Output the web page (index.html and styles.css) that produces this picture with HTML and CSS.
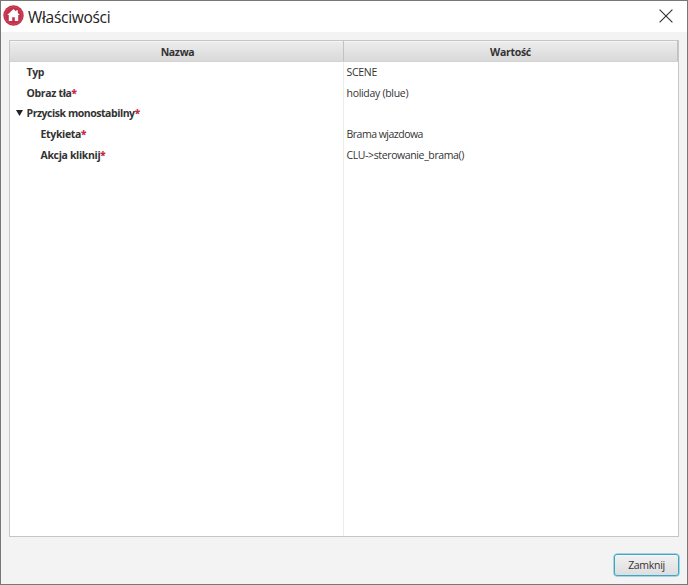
FILE: index.html
```html
<!DOCTYPE html>
<html lang="pl">
<head>
<meta charset="utf-8">
<title>Właściwości</title>
<link rel="stylesheet" href="styles.css">
</head>
<body>
<div class="window">
  <header class="titlebar">
    <svg class="logo" width="21" height="21" viewBox="0 0 21 21">
      <circle cx="10.5" cy="10.5" r="10.2" fill="#c4304a"/>
      <circle cx="10.5" cy="10.5" r="8.6" fill="none" stroke="#d4546a" stroke-width=".6"/>
      <path d="M10.5 4 4.2 10h1.6v6h3.4v-3.8h2.6V16h3.4v-6h1.6l-2-1.9V5.3h-1.6v1.3z" fill="#fff"/>
    </svg>
    <h1 class="title">Właściwości</h1>
    <svg class="close" width="14" height="14" viewBox="0 0 14 14"><path d="M.6.6l12.8 12.8M13.4.6.6 13.4" stroke="#333" stroke-width="1.15"/></svg>
  </header>
  <main class="table">
    <div class="row head"><div class="name">Nazwa</div><div class="value">Wartość</div></div>
    <div class="row"><div class="name">Typ</div><div class="value">SCENE</div></div>
    <div class="row"><div class="name">Obraz tła<b>*</b></div><div class="value">holiday (blue)</div></div>
    <div class="row"><div class="name parent"><svg class="arrow" width="7" height="6" viewBox="0 0 7 6"><path d="M0 0h7L3.5 6z" fill="#222"/></svg><span class="group">Przycisk monostabilny<b>*</b></span></div><div class="value"></div></div>
    <div class="row"><div class="name child">Etykieta<b>*</b></div><div class="value label">Brama wjazdowa</div></div>
    <div class="row"><div class="name child">Akcja kliknij<b>*</b></div><div class="value action">CLU-&gt;sterowanie_brama()</div></div>
    <div class="row filler"><div class="name"></div><div class="value"></div></div>
  </main>
  <footer class="footer"><button class="button">Zamknij</button></footer>
</div>
</body>
</html>
```
FILE: styles.css
```css
* { box-sizing: border-box; }
body { margin: 0; font-family: "Open Sans", "Noto Sans", sans-serif; color: #333; }
.window {
  width: 688px;
  height: 585px;
  display: flex;
  flex-direction: column;
  background: #f3f3f3;
  border: 1px solid #777;
}
.titlebar {
  height: 31px;
  flex: none;
  display: flex;
  align-items: center;
  padding: 0 14px 2px 2px;
  background: #fff;
}
.title {
  flex: 1;
  margin: 3px 0 0 4px;
  font-size: 15.5px;
  font-weight: 400;
  line-height: 20px;
  letter-spacing: -0.3px;
  color: #222;
}
.table {
  flex: none;
  width: 670px;
  height: 497px;
  margin: 8px 0 0 8px;
  display: flex;
  flex-direction: column;
  border: 1px solid #c6c6c6;
  background: #fff;
}
.row {
  display: flex;
  flex: none;
  height: 20.7px;
  font-size: 10.5px;
  line-height: 20.7px;
  white-space: pre;
}
.name {
  width: 334px;
  flex: none;
  padding-left: 16.5px;
  border-right: 1px solid #ececec;
  font-weight: 700;
  letter-spacing: -0.34px;
}
.value { flex: 1; padding-left: 2.5px; letter-spacing: -0.3px; }
.label { letter-spacing: -0.5px; }
.action { letter-spacing: -0.38px; }
.head {
  height: 21px;
  background: linear-gradient(#ededed, #d9d9d9);
  border-bottom: 1px solid #d2d2d2;
  box-shadow: inset 0 1px #f5f5f5;
}
.head .name, .head .value {
  padding: 1px 0 0 2px;
  text-align: center;
  font-weight: 700;
  line-height: 21px;
  border-right: 1px solid #c2c2c2;
}
.head .value { padding-left: 0; }
.parent { display: flex; align-items: center; padding-left: 6px; }
.group { letter-spacing: -0.46px; }
.arrow { margin: 0 3.5px 1px 0; }
.child { padding-left: 30.5px; }
.name b { color: #c8283c; font-size: 10px; line-height: 1; }
.filler { flex: 1; height: auto; }
.footer {
  flex: 1;
  display: flex;
  justify-content: flex-end;
  align-items: flex-start;
  padding: 17px 8px 0 0;
}
.button {
  width: 65px;
  height: 22px;
  padding: 0;
  border: 1px solid #3ba6c6;
  border-radius: 3px;
  box-shadow: 0 0 0 .5px #5ab5d0, inset 0 1px #fafafa;
  background: linear-gradient(#f1f1f1, #dedede);
  font: 10.5px/19px "Open Sans", "Noto Sans", sans-serif;
  letter-spacing: -0.3px;
  color: #333;
}
```
